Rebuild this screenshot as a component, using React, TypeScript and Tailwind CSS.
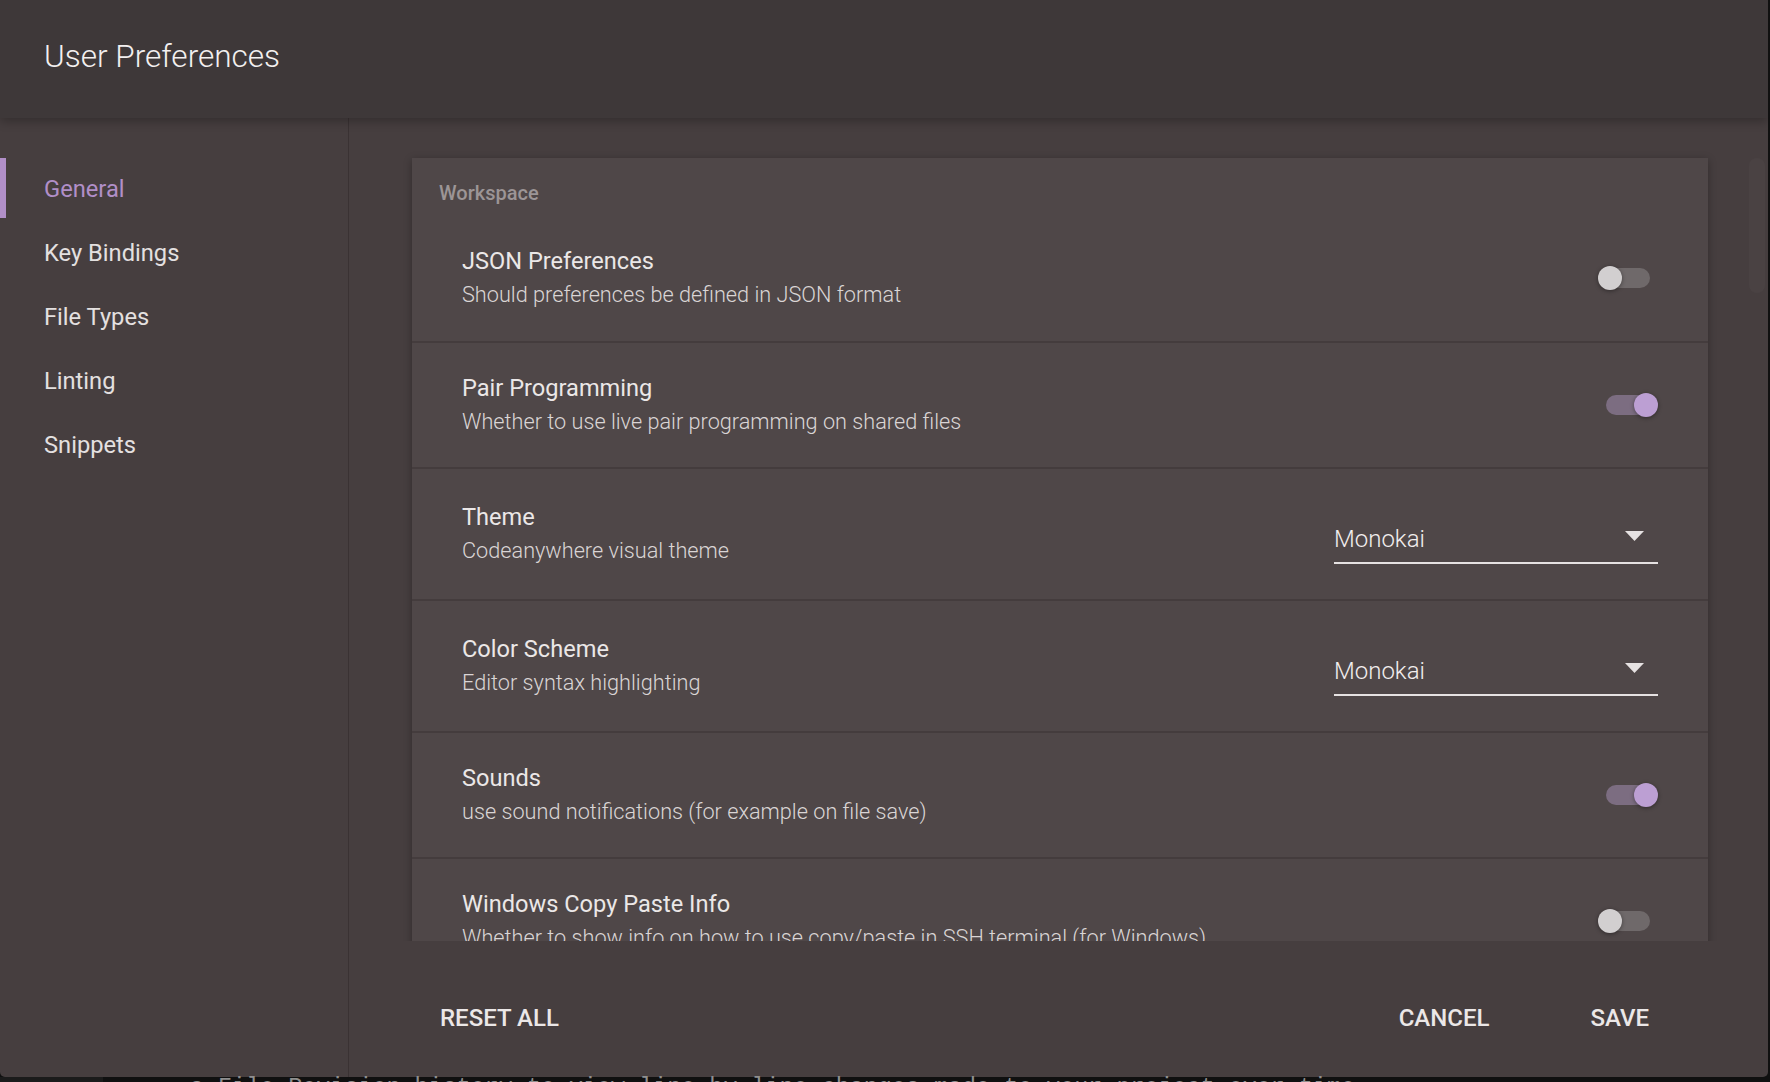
import React from "react";

type Row = {
  title: string;
  desc: string;
  kind: "toggle" | "select";
  on?: boolean;
  value?: string;
};

const rows: Row[] = [
  { title: "JSON Preferences", desc: "Should preferences be defined in JSON format", kind: "toggle", on: false },
  { title: "Pair Programming", desc: "Whether to use live pair programming on shared files", kind: "toggle", on: true },
  { title: "Theme", desc: "Codeanywhere visual theme", kind: "select", value: "Monokai" },
  { title: "Color Scheme", desc: "Editor syntax highlighting", kind: "select", value: "Monokai" },
  { title: "Sounds", desc: "use sound notifications (for example on file save)", kind: "toggle", on: true },
  {
    title: "Windows Copy Paste Info",
    desc: "Whether to show info on how to use copy/paste in SSH terminal (for Windows)",
    kind: "toggle",
    on: false,
  },
];

const nav = ["General", "Key Bindings", "File Types", "Linting", "Snippets"];

function Toggle({ on }: { on?: boolean }) {
  return (
    <div className="relative w-[60px] h-[24px] shrink-0">
      <div
        className={
          on
            ? "absolute left-[8px] top-[2px] w-[50px] h-[20px] rounded-full bg-[#7c6d81]"
            : "absolute left-[2px] top-[2px] w-[50px] h-[20px] rounded-full bg-[#6f696a]"
        }
      />
      <div
        className={
          on
            ? "absolute left-[36px] top-0 w-[24px] h-[24px] rounded-full bg-[#bc9fd3] shadow-[0_1px_4px_rgba(0,0,0,0.4)]"
            : "absolute left-0 top-0 w-[24px] h-[24px] rounded-full bg-[#d2cfd0] shadow-[0_1px_4px_rgba(0,0,0,0.4)]"
        }
      />
    </div>
  );
}

function Select({ value }: { value?: string }) {
  return (
    <div className="pt-[21px]">
      <div className="w-[324px] flex justify-between border-b-2 border-[#e6e2e2] pb-[9px]">
        <span className="text-[24px] leading-[28px] font-light text-[#f2eeee]">{value}</span>
        <svg width="19" height="10" viewBox="0 0 19 10" className="mt-[6px] mr-[14px]">
          <path d="M0 0 L19 0 L9.5 10 Z" fill="#e6e2e2" />
        </svg>
      </div>
    </div>
  );
}

function PrefRow({ row, first }: { row: Row; first: boolean }) {
  return (
    <div
      className={
        (first ? "" : "border-t-2 border-[#443c3d] ") +
        (row.kind === "select" ? "h-[132px] " : "h-[126px] ") +
        "flex items-center justify-between pl-[50px] pr-[50px]"
      }
    >
      <div className="flex flex-col">
        <span className="text-[23.6px] leading-[34px] text-[#ebe7e7]">{row.title}</span>
        <span className="text-[21.7px] leading-[34px] font-light text-[#dad5d5] whitespace-nowrap">{row.desc}</span>
      </div>
      {row.kind === "toggle" ? <Toggle on={row.on} /> : <Select value={row.value} />}
    </div>
  );
}

export default function App() {
  return (
    <div className="w-[1770px] h-[1082px] overflow-hidden bg-[#101010] flex flex-col font-['Roboto',sans-serif]">
      <div className="w-[1768px] h-[1077px] shrink-0 flex flex-col rounded-b-[5px] overflow-hidden bg-[#463e3f]">
        {/* header */}
        <div className="relative z-10 h-[118px] shrink-0 bg-[#3e3839] flex items-center pl-[44px] pb-[4px] shadow-[0_3px_10px_rgba(0,0,0,0.28)]">
          <h1 className="text-[31.5px] leading-[40px] font-light text-[#f3f0f0]">User Preferences</h1>
        </div>

        <div className="flex flex-1 min-h-0">
          {/* sidebar */}
          <div className="w-[349px] shrink-0 border-r border-[#3a3233] pt-[40px] flex flex-col">
            {nav.map((item, i) => (
              <div key={item} className="h-[64px] flex items-start">
                <div className={i === 0 ? "w-[6px] h-[60px] bg-[#b18fc8]" : "w-[6px] h-[60px]"} />
                <span
                  className={
                    "ml-[38px] h-[60px] pt-[4px] flex items-center text-[23.7px] " +
                    (i === 0 ? "text-[#b18fc8]" : "text-[#e4e0e0]")
                  }
                >
                  {item}
                </span>
              </div>
            ))}
          </div>

          {/* main */}
          <div className="flex-1 flex flex-col min-w-0">
            <div className="relative h-[823px] shrink-0 overflow-hidden pt-[40px] pl-[63px] pr-[60px]">
              <div className="bg-[#4f4748] shadow-[0_2px_8px_rgba(0,0,0,0.3)]">
                <div className="h-[57px] pt-[24px] pl-[27px]">
                  <span className="text-[20px] leading-[22px] font-medium text-[#9c9596]">Workspace</span>
                </div>
                {rows.map((row, i) => (
                  <PrefRow key={row.title} row={row} first={i === 0} />
                ))}
              </div>
              <div className="absolute right-[3px] top-[40px] w-[16px] h-[135px] rounded-full bg-[#ffffff06]" />
            </div>

            {/* footer */}
            <div className="h-[136px] shrink-0 flex items-center justify-between pt-[18px] pl-[91px] pr-[119px]">
              <button className="text-[24px] leading-[28px] font-medium text-[#ebe7e7]">RESET ALL</button>
              <div className="flex gap-[101px]">
                <button className="text-[24px] leading-[28px] font-medium text-[#ebe7e7]">CANCEL</button>
                <button className="text-[24px] leading-[28px] font-medium text-[#ebe7e7]">SAVE</button>
              </div>
            </div>
          </div>
        </div>
      </div>
      <div className="flex">
        <div className="w-[103px] h-[5px] bg-[#1b1b1b]" />
        <div className="pl-[87px] text-[23.4px] leading-none whitespace-nowrap text-[#8f8f8f] font-['Liberation_Mono',monospace]">
          a File Revision history to view line-by-line changes made to your project over time
        </div>
      </div>
    </div>
  );
}
